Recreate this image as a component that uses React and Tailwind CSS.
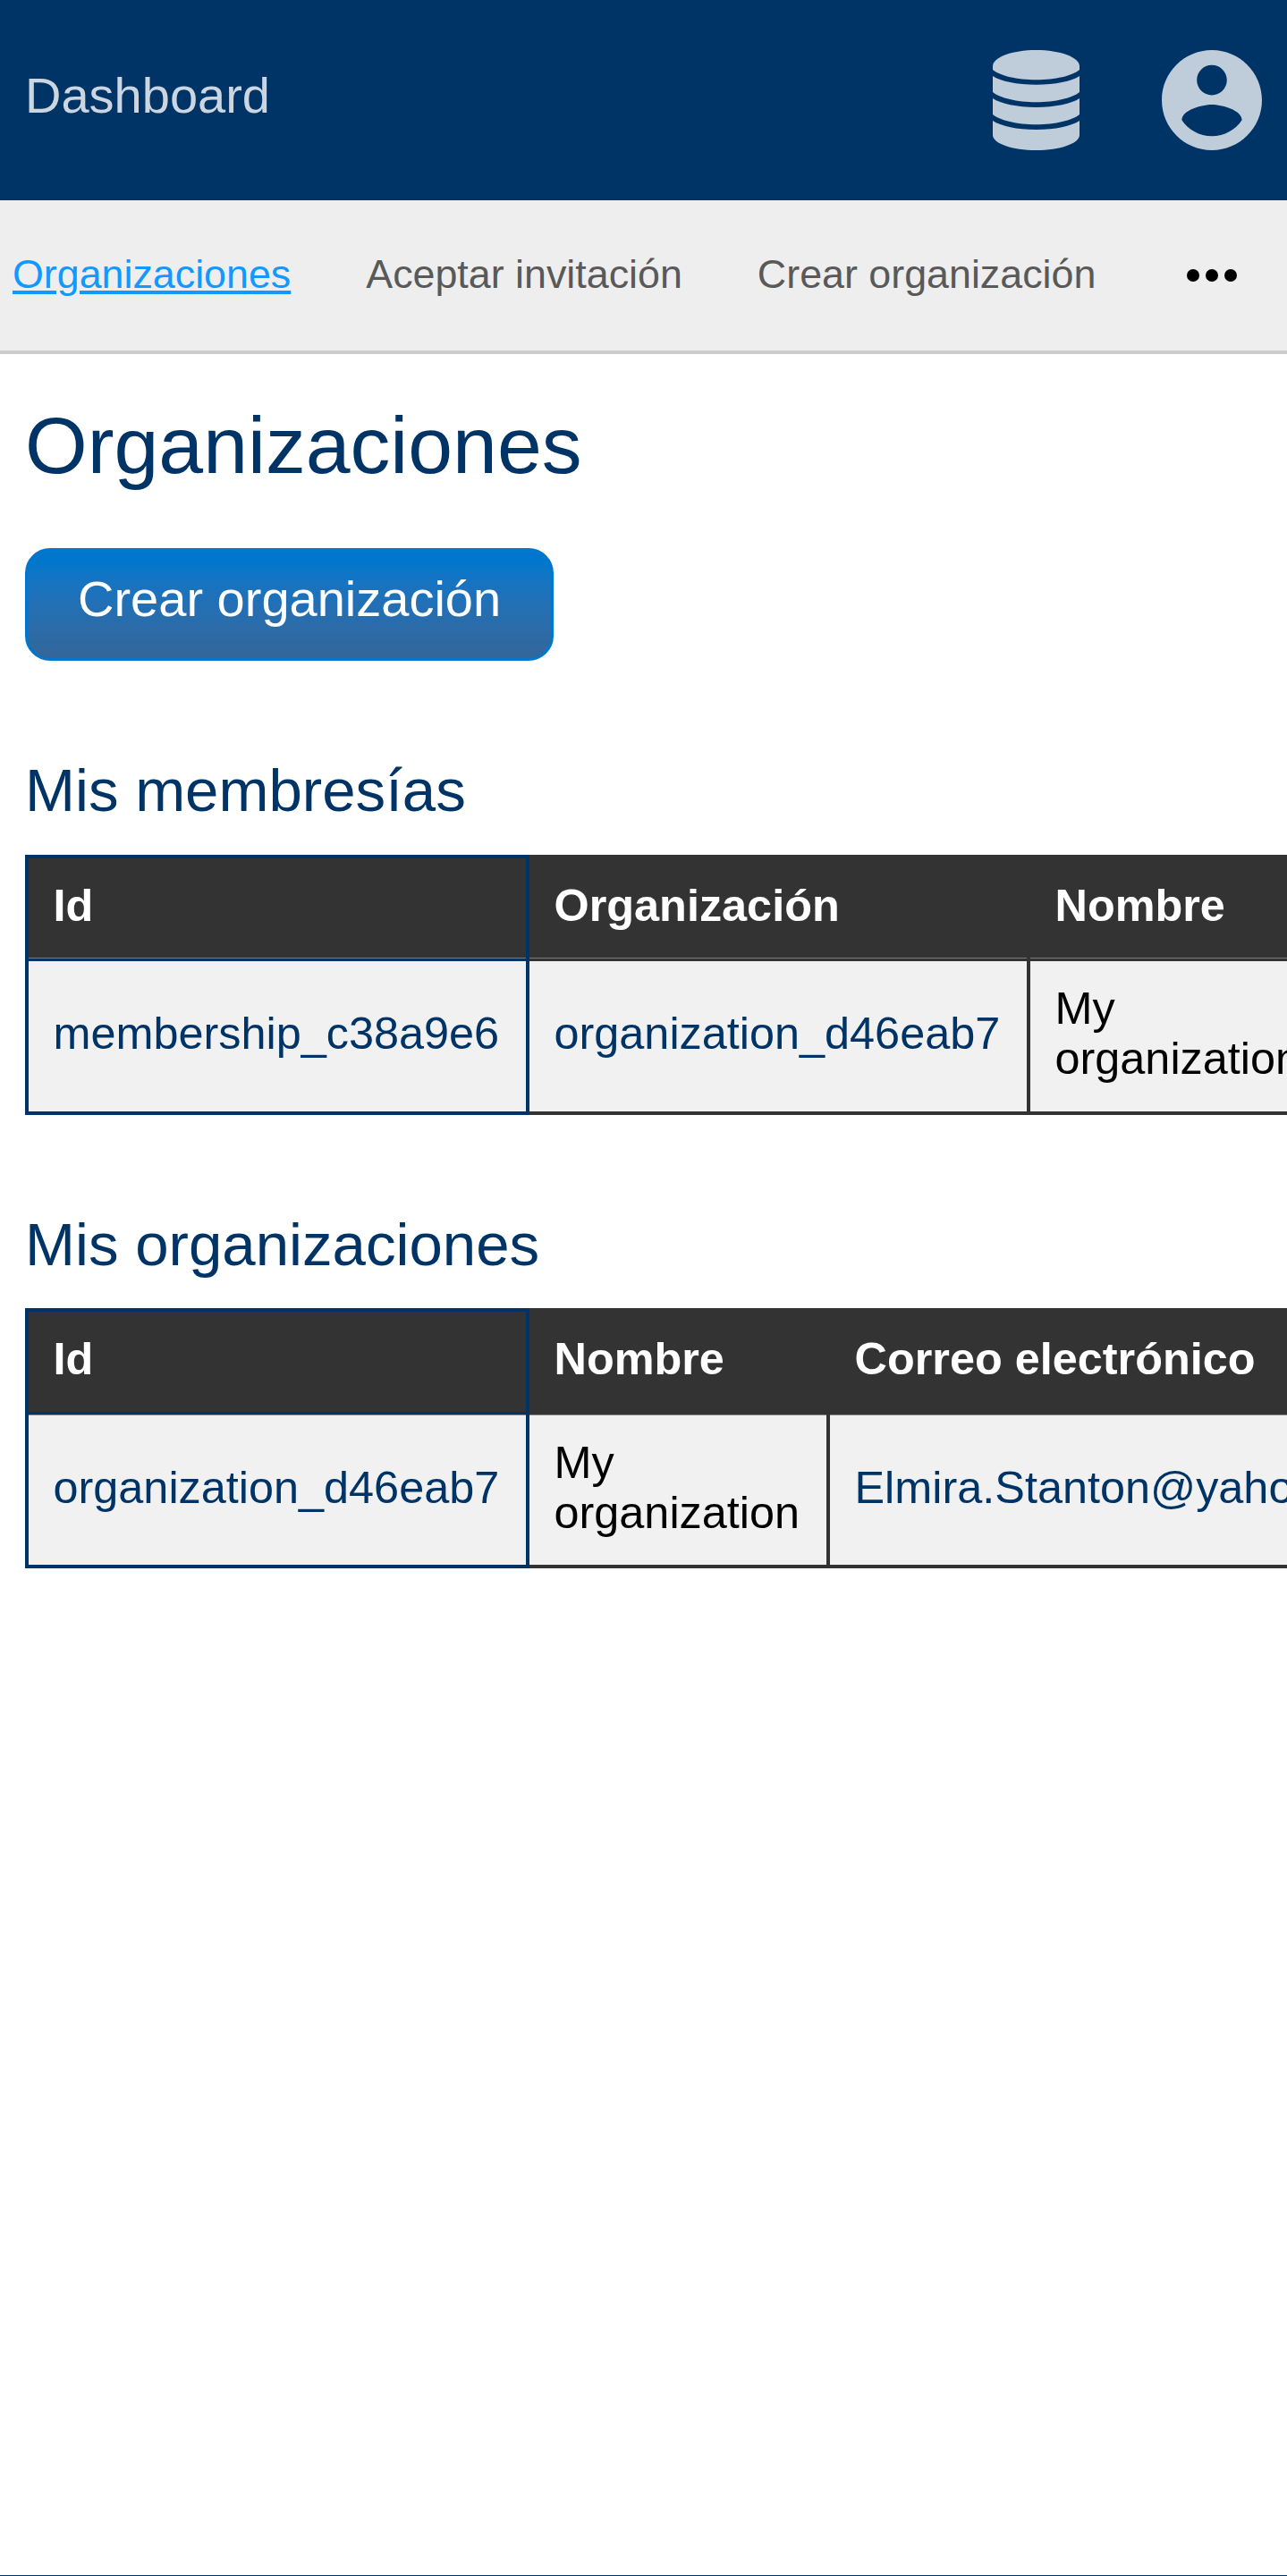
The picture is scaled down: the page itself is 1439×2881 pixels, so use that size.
function DatabaseIcon() {
  return (
    <svg width="97" height="112" viewBox="0 0 97 112" fill="currentColor" aria-hidden="true">
      <path d="M0 18C0 8 21.700 0 48.500 0S97 8 97 18V22C89 28.700 70 33.300 48.500 33.300S8 28.700 0 22Z" />
      <path d="M0 29C9 35 27 38.700 48.500 38.700S88 35 97 29V47C89 53.600 70 58.200 48.500 58.200S8 53.600 0 47Z" />
      <path d="M0 54C9 60 27 63.900 48.500 63.900S88 60 97 54V72C89 78.600 70 83.200 48.500 83.200S8 78.600 0 72Z" />
      <path d="M0 79C9 85 27 89 48.500 89S88 85 97 79V95C97 104.500 75.300 112 48.500 112S0 104.500 0 95Z" />
    </svg>
  );
}

function AccountIcon() {
  return (
    <svg width="112" height="112" viewBox="2 2 20 20" fill="currentColor" aria-hidden="true">
      <path d="M12 2C6.480 2 2 6.480 2 12s4.480 10 10 10 10-4.480 10-10S17.520 2 12 2zm0 3c1.660 0 3 1.340 3 3s-1.340 3-3 3-3-1.340-3-3 1.340-3 3-3zm0 14.200c-2.500 0-4.710-1.280-6-3.220.03-1.990 4-3.080 6-3.080 1.990 0 5.970 1.090 6 3.080-1.290 1.940-3.500 3.220-6 3.220z" />
    </svg>
  );
}

function MoreIcon() {
  return (
    <svg width="56" height="14" viewBox="0 0 56 14" fill="#000" aria-hidden="true">
      <circle cx="7" cy="7" r="7" />
      <circle cx="28" cy="7" r="7" />
      <circle cx="49" cy="7" r="7" />
    </svg>
  );
}

function NavLink({ active, children }) {
  return (
    <a
      className={
        active
          ? "text-[#1199ff] underline decoration-[4px] underline-offset-[3px]"
          : "text-[#595959]"
      }
    >
      {children}
    </a>
  );
}

function DataTable({ columns, row, className, headClass, cellClass }) {
  return (
    <table
      className={
        "table-fixed border-separate border-spacing-0 border-l-4 border-[#003366] text-left text-[50.4px] leading-[56px] " +
        className
      }
    >
      <colgroup>
        {columns.map((c) => (
          <col key={c.title} style={{ width: c.width }} />
        ))}
      </colgroup>
      <thead>
        <tr className="bg-[#333333] text-white">
          {columns.map((c, i) => (
            <th
              key={c.title}
              className={
                "border-t-4 border-r-4 border-b-[3px] px-[27.5px] pt-0 font-bold " +
                (i === 0 ? "border-[#003366] " : "border-[#333333] ") +
                headClass
              }
            >
              {c.title}
            </th>
          ))}
        </tr>
      </thead>
      <tbody>
        <tr className="bg-[#f1f1f1]">
          {row.map((cell, i) => (
            <td
              key={i}
              className={
                "border-r-4 border-b-4 px-[27.5px] pt-0 " +
                (i === 0 ? "border-[#003366] " : "border-[#333333] ") +
                (cell.link ? "text-[#003366] " : "text-black ") +
                cellClass
              }
            >
              {cell.text}
            </td>
          ))}
        </tr>
      </tbody>
    </table>
  );
}

export default function App() {
  return (
    <div className="flex h-[2881px] w-[1439px] flex-col overflow-hidden border-b border-[#003366] bg-white font-['Liberation_Sans',Arial,sans-serif]">
      <header className="flex h-[224px] shrink-0 items-center justify-between bg-[#003366] px-[28px]">
        <span className="pb-[11px] text-[56px] leading-[64px] text-[#ccd6e0]">Dashboard</span>
        <div className="flex items-center gap-[92px] text-[#bfccd9]">
          <DatabaseIcon />
          <AccountIcon />
        </div>
      </header>

      <nav className="flex h-[172px] shrink-0 items-center border-b-4 border-[#cccccc] bg-[#eeeeee] px-[14px] text-[44.8px] leading-[52px] whitespace-nowrap">
        <div className="flex gap-[84px] pb-[4px]">
          <NavLink active>Organizaciones</NavLink>
          <NavLink>Aceptar invitación</NavLink>
          <NavLink>Crear organización</NavLink>
        </div>
        <span className="ml-auto pr-[42px]">
          <MoreIcon />
        </span>
      </nav>

      <main className="flex flex-col items-start pl-[28px] text-[#003366]">
        <h1 className="mt-[50px] text-[89.6px] leading-[104px]">Organizaciones</h1>
        <button className="mt-[63px] flex h-[126px] items-center rounded-[28px] border-[3.5px] border-[#0077cc] bg-linear-to-b from-[#0077cc] from-10% to-[#336699] px-[56px] pb-[12px] text-[56px] leading-[64px] text-white">
          Crear organización
        </button>

        <h2 className="mt-[107px] text-[67.2px] leading-[76px]">Mis membresías</h2>
        <DataTable
          className="mt-[34px] w-[1484px]"
          headClass="h-[119px] pb-[7px] shadow-[inset_0_-1px_0_#7b7b7b]"
          cellClass="h-[172px] pb-[7px]"
          columns={[
            { title: "Id", width: 560 },
            { title: "Organización", width: 560 },
            { title: "Nombre", width: 360 },
          ]}
          row={[
            { text: "membership_c38a9e6", link: true },
            { text: "organization_d46eab7", link: true },
            { text: "My organization" },
          ]}
        />

        <h2 className="mt-[107px] text-[67.2px] leading-[76px]">Mis organizaciones</h2>
        <DataTable
          className="mt-[33px] w-[1601px]"
          headClass="h-[119px] pb-[7px]"
          cellClass="h-[172px] pb-[4px] shadow-[inset_0_1px_0_#8c8c8c]"
          columns={[
            { title: "Id", width: 560 },
            { title: "Nombre", width: 336 },
            { title: "Correo electrónico", width: 701 },
          ]}
          row={[
            { text: "organization_d46eab7", link: true },
            { text: "My organization" },
            { text: "Elmira.Stanton@yahoo.com", link: true },
          ]}
        />
      </main>
    </div>
  );
}
